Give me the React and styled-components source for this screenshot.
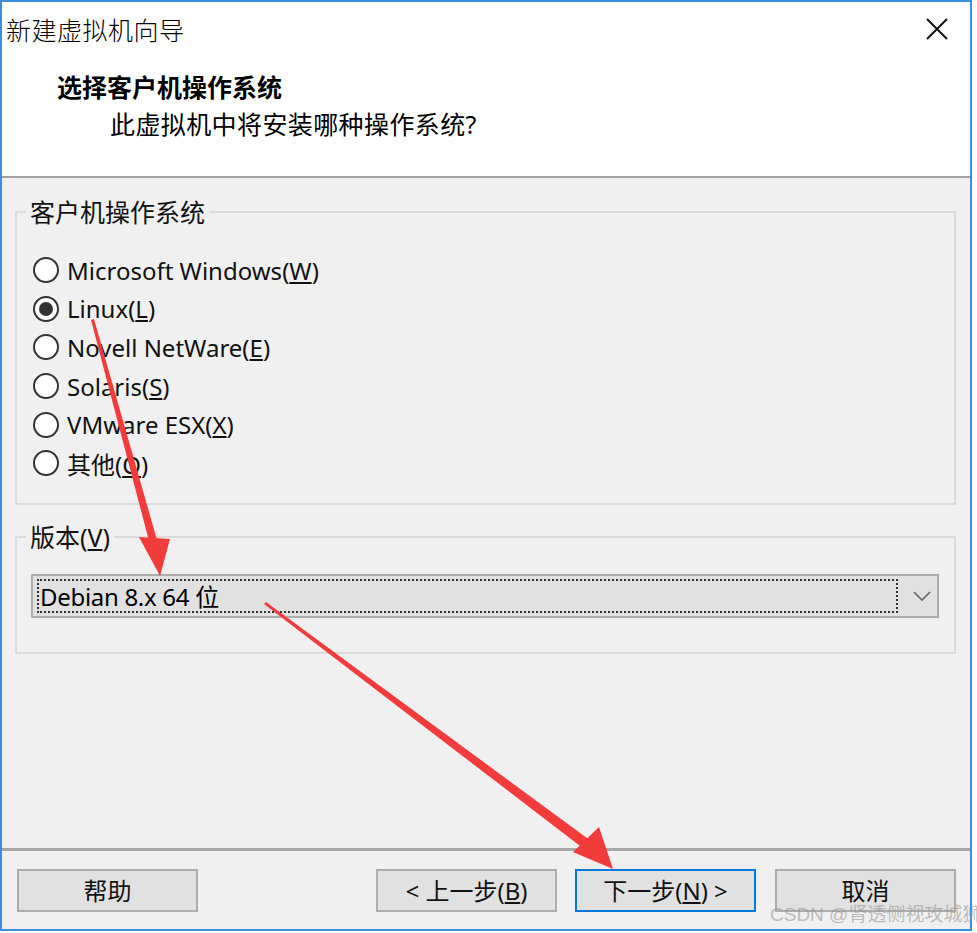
import React from "react";
import styled, { createGlobalStyle } from "styled-components";

const FONT = `"Noto Sans", "Noto Sans CJK SC", sans-serif`;

const OS_OPTIONS = [
  { label: "Microsoft Windows", key: "W" },
  { label: "Linux", key: "L", checked: true },
  { label: "Novell NetWare", key: "E" },
  { label: "Solaris", key: "S" },
  { label: "VMware ESX", key: "X" },
  { label: "其他", key: "O" },
];

const GlobalStyle = createGlobalStyle`
  html, body {
    margin: 0;
    padding: 0;
    background: #ffffff;
    font-family: ${FONT};
    color: #000;
  }
  body {
    width: 977px;
    height: 933px;
    overflow: hidden;
  }
`;

const Stage = styled.div`
  position: relative;
  width: 977px;
  height: 933px;
  overflow: hidden;
`;

const Window = styled.div`
  width: 972px;
  height: 931px;
  box-sizing: border-box;
  border: 2px solid #3a8ee0;
  display: flex;
  flex-direction: column;
  background: #f0f0f0;
`;

const TitleBar = styled.div`
  height: 54px;
  display: flex;
  align-items: center;
  justify-content: space-between;
  padding: 0 21px 0 4px;
  background: #fff;
  font-size: 25px;
  font-weight: 300;
  letter-spacing: 0.5px;
`;

const CloseGlyph = styled.svg`
  width: 24px;
  height: 24px;
  display: block;
`;

const Header = styled.header`
  background: #fff;
  height: 122px;
  box-sizing: border-box;
  padding-top: 16px;
  border-bottom: 2px solid #a0a0a0;
`;

const Heading = styled.h1`
  margin: 0 0 7px 55px;
  font-size: 25px;
  line-height: 30px;
  font-weight: 700;
`;

const Subtitle = styled.p`
  margin: 0 0 0 108px;
  font-size: 25px;
  line-height: 30px;
  font-weight: 400;
  letter-spacing: 0.4px;
`;

const Body = styled.main`
  flex: 1;
  padding: 19px 14px 0 13px;
  display: flex;
  flex-direction: column;
  gap: 17px;
`;

const GroupBox = styled.fieldset`
  margin: 0;
  padding: ${(p) => p.$pad};
  border: 2px solid #dadada;
  min-width: 0;
`;

const Legend = styled.legend`
  margin-left: 9px;
  padding: 0 4px;
  font-size: 25px;
  line-height: 30px;
  color: #111;
`;

const RadioList = styled.div`
  display: flex;
  flex-direction: column;
  padding-left: 16px;
`;

const RadioRow = styled.label`
  height: 38.6px;
  display: flex;
  align-items: center;
  gap: 8px;
  font-size: 24px;
  color: #111;
`;

const RadioCircle = styled.span`
  width: 26px;
  height: 26px;
  box-sizing: border-box;
  border-radius: 50%;
  border: 2px solid #333;
  background: #fff;
  display: flex;
  align-items: center;
  justify-content: center;
  flex-shrink: 0;

  &::after {
    content: "";
    width: 14px;
    height: 14px;
    border-radius: 50%;
    background: #333;
    display: ${(p) => (p.$checked ? "block" : "none")};
  }
`;

const Combo = styled.div`
  height: 44px;
  margin: 0 15px 0 14px;
  box-sizing: border-box;
  border: 2px solid #adadad;
  background: #e1e1e1;
  display: flex;
  align-items: center;
  padding: 0 4px;
  gap: 13px;
`;

const ComboFocus = styled.div`
  flex: 1;
  height: 34px;
  box-sizing: border-box;
  border: 2px dotted #333;
  display: flex;
  align-items: center;
  padding-left: 1px;
  font-size: 24px;
  letter-spacing: -0.3px;
`;

const Chevron = styled.svg`
  width: 22px;
  height: 14px;
  display: block;
`;

const Footer = styled.footer`
  border-top: 3px solid #a7a7a7;
  height: 81px;
  box-sizing: border-box;
  padding: 18px 14px 0 15px;
  display: flex;
  align-items: flex-start;
`;

const Button = styled.button`
  width: 181px;
  height: 43px;
  box-sizing: border-box;
  border: 2px solid ${(p) => (p.$primary ? "#0078d7" : "#adadad")};
  background: #e1e1e1;
  font-family: ${FONT};
  font-size: 24px;
  line-height: 30px;
  color: #111;
  padding: 0;
  margin-left: ${(p) => p.$gap || 0}px;
`;

const Spacer = styled.div`
  flex: 1;
`;

const Watermark = styled.div`
  position: absolute;
  left: 770px;
  top: 902px;
  font-size: 19px;
  line-height: 26px;
  white-space: nowrap;
  color: rgba(150, 150, 150, 0.6);
  font-family: "Liberation Sans", "Noto Sans CJK SC", sans-serif;
`;

const Annotations = styled.svg`
  position: absolute;
  left: 0;
  top: 0;
  width: 977px;
  height: 933px;
  pointer-events: none;
`;

const Mnemonic = ({ label, k }) => (
  <>
    {label}(<u>{k}</u>)
  </>
);

export default function App() {
  return (
    <Stage>
      <GlobalStyle />
      <Window>
        <TitleBar>
          <span>新建虚拟机向导</span>
          <CloseGlyph viewBox="0 0 24 24">
            <path d="M2 2 L22 22 M22 2 L2 22" stroke="#111" strokeWidth="2" />
          </CloseGlyph>
        </TitleBar>
        <Header>
          <Heading>选择客户机操作系统</Heading>
          <Subtitle>此虚拟机中将安装哪种操作系统?</Subtitle>
        </Header>
        <Body>
          <GroupBox $pad="24px 0 20px 0">
            <Legend>客户机操作系统</Legend>
            <RadioList>
              {OS_OPTIONS.map((o) => (
                <RadioRow key={o.key}>
                  <RadioCircle $checked={o.checked} />
                  <span>
                    <Mnemonic label={o.label} k={o.key} />
                  </span>
                </RadioRow>
              ))}
            </RadioList>
          </GroupBox>
          <GroupBox $pad="22px 0 34px 0">
            <Legend>
              <Mnemonic label="版本" k="V" />
            </Legend>
            <Combo>
              <ComboFocus>Debian 8.x 64 位</ComboFocus>
              <Chevron viewBox="0 0 22 14">
                <path d="M3 3 L11 11 L19 3" fill="none" stroke="#666" strokeWidth="1.6" />
              </Chevron>
            </Combo>
          </GroupBox>
        </Body>
        <Footer>
          <Button>帮助</Button>
          <Spacer />
          <Button>
            &lt; 上一步(<u>B</u>)
          </Button>
          <Button $primary $gap={18}>
            下一步(<u>N</u>) &gt;
          </Button>
          <Button $gap={19}>取消</Button>
        </Footer>
      </Window>
      <Annotations viewBox="0 0 977 933">
        <polygon points="91,320 94,319 157,540 149,541" fill="#f23c3c" />
        <polygon points="160,576 139,537 170,539" fill="#f23c3c" />
        <polygon points="264,604 266,602 591,841 584,849" fill="#f23c3c" />
        <polygon points="613,869 573,852 599,827" fill="#f23c3c" />
      </Annotations>
      <Watermark>CSDN @肾透侧视攻城狮</Watermark>
    </Stage>
  );
}
